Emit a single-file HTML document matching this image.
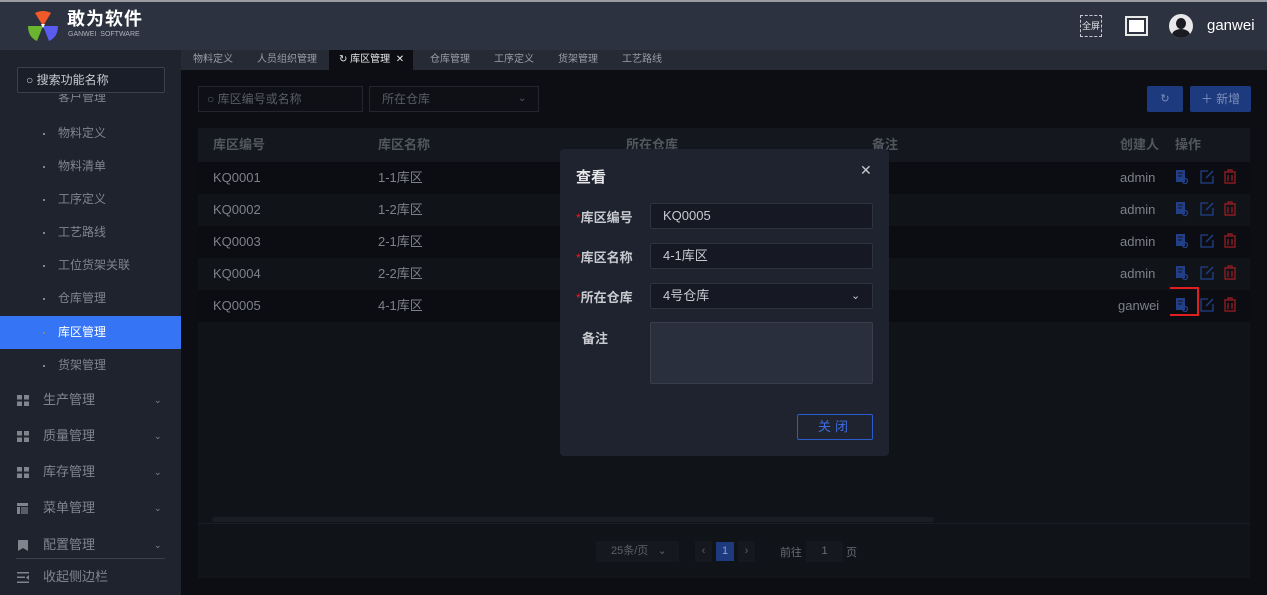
<!DOCTYPE html>
<html><head><meta charset="utf-8"><style>
*{margin:0;padding:0;box-sizing:border-box}
body{width:1267px;height:595px;overflow:hidden;background:#0c0e13;font-family:"Liberation Sans","Noto Sans CJK SC",sans-serif;position:relative;font-size:13px}
.abs{position:absolute}
#hdr{left:0;top:0;width:1267px;height:50px;background:#2d3240;border-top:2px solid #9a9ca2}
#side{left:0;top:50px;width:181px;height:545px;background:#1f232e}
#tabs{left:181px;top:50px;width:1086px;height:20px;background:#262a35}
.tab{position:absolute;top:0;height:20px;line-height:20px;font-size:10px;color:#9a9ea8}
.mi{position:absolute;left:0;width:181px;height:33px;line-height:33px;color:#80848d;font-size:12px;padding-left:58px}
.mi:before{content:"";position:absolute;left:43px;top:16px;width:2px;height:2px;background:#80848d}
.gi{position:absolute;left:0;width:181px;height:36px;line-height:36px;color:#80848d;font-size:13px;padding-left:43px}
.gi .ic{position:absolute;left:17px;top:13px;width:12px;height:11px}
.gi .ch{position:absolute;left:154px;top:0;font-size:9px;color:#80848d}
.row{position:absolute;left:198px;width:1052px;height:32px;line-height:32px;color:#7e8188;font-size:13px}
.row span{position:absolute}
.fld{position:absolute;left:650px;width:223px;height:26px;background:#161923;border:1px solid #2e3340;border-radius:2px;color:#c8cad0;font-size:13px;line-height:24px;padding-left:12px}
.lab{position:absolute;left:576px;color:#c8cad0;font-size:13px;font-weight:bold}
.lab b{color:#e02020;font-weight:normal;font-size:12px}
</style></head><body>
<div id="hdr" class="abs">
 <svg class="abs" style="left:26px;top:8px" width="34" height="32" viewBox="0 0 34 32">
  <path d="M17 16 L9 3 Q17 -1 25 3 Z" fill="#f05a28"/>
  <path d="M17 16 L2 16 Q2 27 11 31 Z" fill="#6ab42e"/>
  <path d="M17 16 L32 16 Q32 27 23 31 Z" fill="#5a5cf0"/>
  <path d="M15 14 L19 14 L17 18 Z" fill="#fff"/>
 </svg>
 <div class="abs" style="left:67px;top:6px;color:#fff;font-size:18px;line-height:22px;font-weight:bold;letter-spacing:1px">敢为软件</div>
 <div class="abs" style="left:68px;top:29px;color:#aeb2ba;font-size:7px;line-height:8px">GANWEI&nbsp; SOFTWARE</div>
 <div class="abs" style="left:1080px;top:13px;width:22px;height:22px;border:1px dashed #c8cad0;color:#dfe1e5;font-size:9px;line-height:20px;text-align:center">全屏</div>
 <div class="abs" style="left:1125px;top:14px;width:23px;height:20px;border:2px solid #e8e8e8;padding:2px"><div style="width:100%;height:100%;background:#fff"></div></div>
 <div class="abs" style="left:1169px;top:12px;width:24px;height:24px;border-radius:50%;background:#e8e8ea;overflow:hidden"><div style="position:absolute;left:7px;top:4px;width:10px;height:11px;border-radius:50%;background:#1a1c22"></div><div style="position:absolute;left:3px;top:15px;width:18px;height:12px;border-radius:50%;background:#1a1c22"></div></div>
 <div class="abs" style="left:1207px;top:15px;color:#fff;font-size:15px">ganwei</div>
</div>
<div id="side" class="abs">
 <div class="mi" style="top:44px;height:14px;line-height:6px;overflow:hidden">客户管理</div>
 <div class="abs" style="left:17px;top:17px;width:148px;height:26px;border:1px solid #394050;border-radius:2px;background:#1a1e28;color:#c8cad0;font-size:12px;line-height:24px;padding-left:8px">○ 搜索功能名称</div>
 <div class="mi" style="top:67px">物料定义</div>
 <div class="mi" style="top:100px">物料清单</div>
 <div class="mi" style="top:133px">工序定义</div>
 <div class="mi" style="top:166px">工艺路线</div>
 <div class="mi" style="top:199px">工位货架关联</div>
 <div class="mi" style="top:232px">仓库管理</div>
 <div class="mi" style="top:266px;background:#3574f5;color:#fff">库区管理</div>
 <div class="mi" style="top:299px">货架管理</div>
 <div class="gi" style="top:332px"><svg class="ic" viewBox="0 0 12 11"><rect width="5" height="4.5" fill="#80848d"/><rect x="7" width="5" height="4.5" fill="#80848d"/><rect y="6.5" width="5" height="4.5" fill="#80848d"/><rect x="7" y="6.5" width="5" height="4.5" fill="#80848d"/></svg>生产管理<span class="ch">⌄</span></div>
 <div class="gi" style="top:368px"><svg class="ic" viewBox="0 0 12 11"><rect width="5" height="4.5" fill="#80848d"/><rect x="7" width="5" height="4.5" fill="#80848d"/><rect y="6.5" width="5" height="4.5" fill="#80848d"/><rect x="7" y="6.5" width="5" height="4.5" fill="#80848d"/></svg>质量管理<span class="ch">⌄</span></div>
 <div class="gi" style="top:404px"><svg class="ic" viewBox="0 0 12 11"><rect width="5" height="4.5" fill="#80848d"/><rect x="7" width="5" height="4.5" fill="#80848d"/><rect y="6.5" width="5" height="4.5" fill="#80848d"/><rect x="7" y="6.5" width="5" height="4.5" fill="#80848d"/></svg>库存管理<span class="ch">⌄</span></div>
 <div class="gi" style="top:440px"><svg class="ic" viewBox="0 0 12 11"><rect width="11" height="3" fill="#80848d"/><rect y="4" width="3" height="7" fill="#80848d"/><rect x="4" y="4" width="7" height="7" fill="#80848d" opacity=".6"/></svg>菜单管理<span class="ch">⌄</span></div>
 <div class="gi" style="top:477px"><svg class="ic" viewBox="0 0 12 11"><path d="M1 0H11V11L6 8L1 11Z" fill="#80848d"/></svg>配置管理<span class="ch">⌄</span></div>
 <div class="abs" style="left:16px;top:508px;width:149px;height:1px;background:#3a3f4c"></div>
 <div class="gi" style="top:509px"><svg class="ic" viewBox="0 0 12 11"><rect width="12" height="1.5" fill="#80848d"/><rect y="4.5" width="8" height="1.5" fill="#80848d"/><rect y="9.5" width="12" height="1.5" fill="#80848d"/><path d="M12 3V8L9 5.5Z" fill="#80848d"/></svg>收起侧边栏</div>
</div>
<div id="tabs" class="abs">
 <div class="tab" style="left:12px">物料定义</div>
 <div class="tab" style="left:76px">人员组织管理</div>
 <div class="tab" style="left:148px;width:84px;background:#0c0e13;color:#e8e8e8;padding-left:10px">↻ 库区管理 &nbsp;✕</div>
 <div class="tab" style="left:249px">仓库管理</div>
 <div class="tab" style="left:313px">工序定义</div>
 <div class="tab" style="left:377px">货架管理</div>
 <div class="tab" style="left:441px">工艺路线</div>
</div>
<div class="abs" style="left:198px;top:86px;width:165px;height:26px;border:1px solid #23262e;background:#0e1016;color:#5a5d66;font-size:12px;line-height:24px;padding-left:8px">○ 库区编号或名称</div>
<div class="abs" style="left:369px;top:86px;width:170px;height:26px;border:1px solid #23262e;background:#0e1016;color:#5a5d66;font-size:12px;line-height:24px;padding-left:12px">所在仓库<span style="position:absolute;left:148px;font-size:10px">⌄</span></div>
<div class="abs" style="left:1147px;top:86px;width:36px;height:26px;background:#1d3a7e;border-radius:2px;color:#7e8fb8;text-align:center;line-height:26px;font-size:11px">↻</div>
<div class="abs" style="left:1190px;top:86px;width:61px;height:26px;background:#1d3a7e;border-radius:2px;color:#7e8fb8;text-align:center;line-height:26px;font-size:12px">＋ 新增</div>
<div class="abs" style="left:198px;top:128px;width:1052px;height:450px;background:#101318"></div>
<div class="row" style="top:128px;height:34px;line-height:34px;background:#14171d;color:#52565e;font-weight:bold"><span style="left:15px">库区编号</span><span style="left:180px">库区名称</span><span style="left:428px">所在仓库</span><span style="left:674px">备注</span><span style="left:922px">创建人</span><span style="left:977px">操作</span></div>
<div class="row" style="top:162px;background:#0b0d12"><span style="left:15px">KQ0001</span><span style="left:180px">1-1库区</span><span style="left:922px">admin</span></div>
<div class="row" style="top:194px;background:#101318"><span style="left:15px">KQ0002</span><span style="left:180px">1-2库区</span><span style="left:922px">admin</span></div>
<div class="row" style="top:226px;background:#0b0d12"><span style="left:15px">KQ0003</span><span style="left:180px">2-1库区</span><span style="left:922px">admin</span></div>
<div class="row" style="top:258px;background:#101318"><span style="left:15px">KQ0004</span><span style="left:180px">2-2库区</span><span style="left:922px">admin</span></div>
<div class="row" style="top:290px;background:#0b0d12"><span style="left:15px">KQ0005</span><span style="left:180px">4-1库区</span><span style="left:920px">ganwei</span></div>
<svg class="abs" style="left:1170px;top:162px" width="70" height="160" viewBox="0 0 70 160">
 <g id="r">
  <path d="M6 8H15V20H6Z" fill="#22408a"/><path d="M8 11H13M8 14H12" stroke="#11141a" stroke-width="1"/><circle cx="15" cy="19" r="2.5" fill="none" stroke="#22408a" stroke-width="1.3"/>
  <path d="M38 9H31V21H43V14M36 16L43 9" fill="none" stroke="#22408a" stroke-width="1.3"/>
  <path d="M54 10H66M58 10V8H62V10M55 11V21H65V11M58 13V19M62 13V19" fill="none" stroke="#8a1c22" stroke-width="1.4"/>
 </g>
 <use href="#r" y="32"/><use href="#r" y="64"/><use href="#r" y="96"/><use href="#r" y="128"/>
 <rect x="-1" y="126" width="29" height="27" fill="none" stroke="#e02020" stroke-width="2"/>
</svg>
<div class="abs" style="left:212px;top:517px;width:722px;height:5px;background:#1a1d24;border-radius:3px"></div>
<div class="abs" style="left:198px;top:523px;width:1052px;height:1px;background:#1a1d24"></div>
<div class="abs" style="left:596px;top:541px;width:83px;height:21px;background:#15181e;color:#5c6068;font-size:11px;line-height:21px;padding-left:15px">25条/页 &nbsp;&nbsp;⌄</div>
<div class="abs" style="left:695px;top:541px;width:17px;height:21px;background:#15181e;color:#5c6068;font-size:11px;line-height:21px;text-align:center">‹</div>
<div class="abs" style="left:716px;top:542px;width:18px;height:19px;background:#1d3a7e;color:#8fa0c8;font-size:11px;line-height:19px;text-align:center">1</div>
<div class="abs" style="left:738px;top:541px;width:17px;height:21px;background:#15181e;color:#5c6068;font-size:11px;line-height:21px;text-align:center">›</div>
<div class="abs" style="left:780px;top:544px;color:#6a6d75;font-size:11px">前往</div>
<div class="abs" style="left:806px;top:541px;width:37px;height:21px;background:#15181e;color:#6a6d75;font-size:11px;line-height:21px;text-align:center">1</div>
<div class="abs" style="left:846px;top:544px;color:#6a6d75;font-size:11px">页</div>
<div class="abs" style="left:560px;top:149px;width:329px;height:307px;background:#1f2330;border-radius:4px"></div>
<div class="abs" style="left:576px;top:166px;color:#e8e8ea;font-size:15px;font-weight:bold">查看</div>
<div class="abs" style="left:860px;top:162px;color:#c8cad0;font-size:14px">✕</div>
<div class="lab" style="top:207px"><b>*</b>库区编号</div><div class="fld" style="top:203px">KQ0005</div>
<div class="lab" style="top:247px"><b>*</b>库区名称</div><div class="fld" style="top:243px">4-1库区</div>
<div class="lab" style="top:287px"><b>*</b>所在仓库</div><div class="fld" style="top:283px">4号仓库<span style="position:absolute;left:200px;font-size:11px">⌄</span></div>
<div class="lab" style="top:328px;left:582px">备注</div>
<div class="abs" style="left:650px;top:322px;width:223px;height:62px;background:#2a2f3d;border:1px solid #3a3f4c;border-radius:2px"></div>
<div class="abs" style="left:797px;top:414px;width:76px;height:26px;border:1px solid #2a5cd0;border-radius:2px;color:#3d6de0;text-align:center;line-height:24px;font-size:13px;letter-spacing:4px">关闭</div>
</body></html>
